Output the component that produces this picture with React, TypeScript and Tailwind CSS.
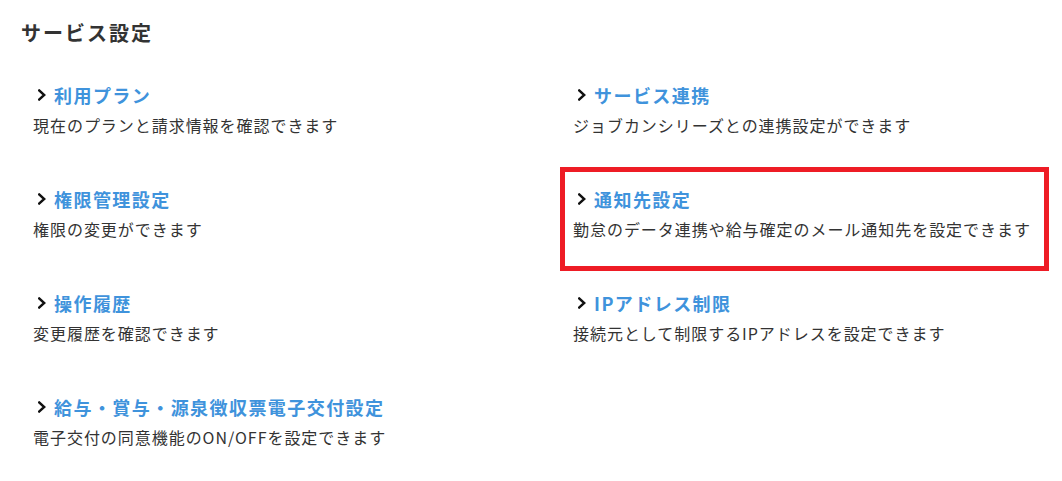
const items = [
  { title: "利用プラン", desc: "現在のプランと請求情報を確認できます" },
  { title: "サービス連携", desc: "ジョブカンシリーズとの連携設定ができます" },
  { title: "権限管理設定", desc: "権限の変更ができます" },
  { title: "通知先設定", desc: "勤怠のデータ連携や給与確定のメール通知先を設定できます", highlight: true },
  { title: "操作履歴", desc: "変更履歴を確認できます" },
  { title: "IPアドレス制限", desc: "接続元として制限するIPアドレスを設定できます" },
  { title: "給与・賞与・源泉徴収票電子交付設定", desc: "電子交付の同意機能のON/OFFを設定できます" },
];

function Chevron() {
  return (
    <svg width="8" height="12" viewBox="0 0 8 12" className="shrink-0">
      <polyline points="1.2,1.5 6.2,6 1.2,10.5" fill="none" stroke="#111" strokeWidth="2.4" strokeLinecap="square" />
    </svg>
  );
}

export default function App() {
  return (
    <div
      className="w-[1062px] h-[481px] bg-white text-[#333] overflow-hidden"
      style={{ fontFamily: '"Noto Sans CJK JP", "Noto Sans", sans-serif' }}
    >
      <h1 className="pl-[21px] pt-[18px] text-[20px] leading-[30px] font-bold tracking-[0.1em] text-[#333]">
        サービス設定
      </h1>
      <div className="mt-[15px] pl-[20px] grid grid-cols-[489px_489px] gap-x-[51px]">
        {items.map((it) => (
          <div
            key={it.title}
            className={`h-[104px] border-[5px] px-[8px] pt-[14px] ${it.highlight ? "border-[#ee1c25]" : "border-transparent"}`}
          >
            <a href="#" className="flex items-center gap-[8px] h-[26px] pl-[5px]">
              <Chevron />
              <span className="text-[18px] font-bold tracking-[0.08em] text-[#3f93dc] whitespace-nowrap">{it.title}</span>
            </a>
            <p className="mt-[5px] text-[16px] leading-[24px] tracking-[0.06em] text-[#333] whitespace-nowrap">{it.desc}</p>
          </div>
        ))}
      </div>
    </div>
  );
}
